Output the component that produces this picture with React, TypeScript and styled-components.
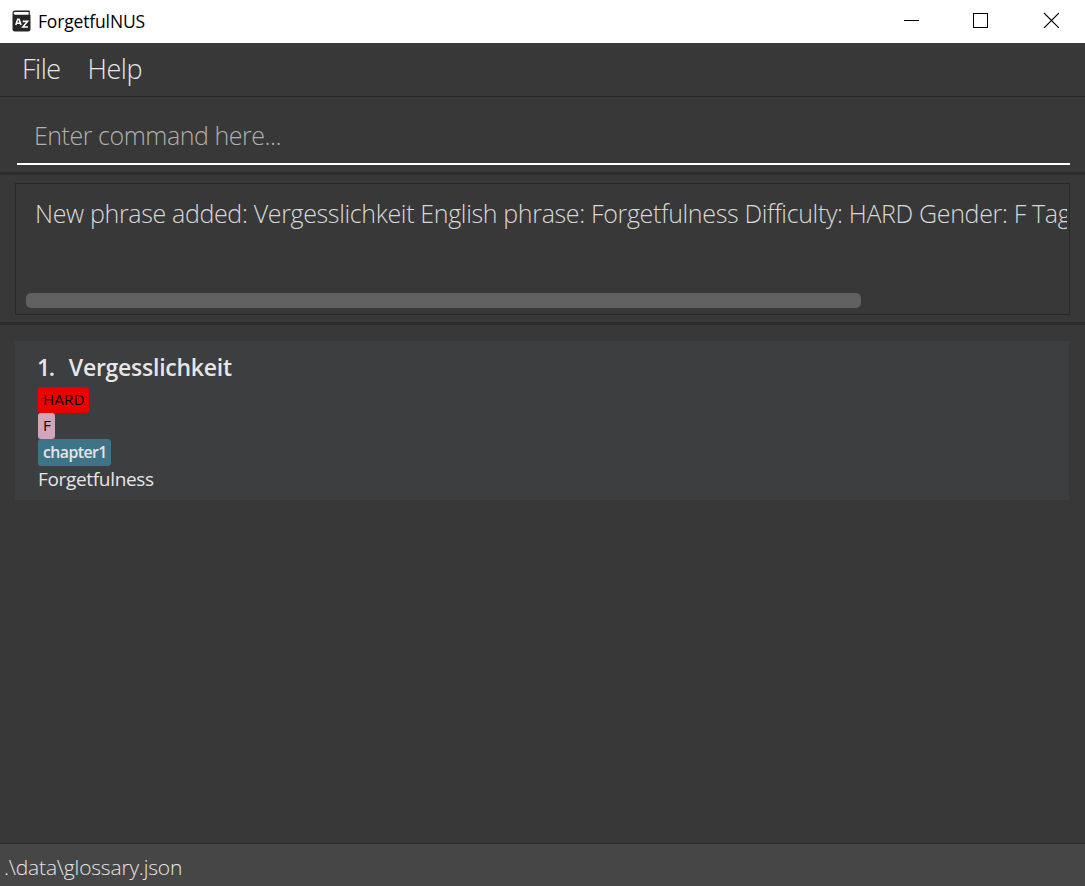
import React from "react";
import styled, { createGlobalStyle } from "styled-components";

const GlobalStyle = createGlobalStyle`
  * { box-sizing: border-box; }
  html, body { margin: 0; padding: 0; background: #383838; }
  body { font-family: "Open Sans", "Noto Sans", sans-serif; overflow: hidden; }
`;

const Window = styled.div`
  width: 1085px;
  height: 886px;
  display: flex;
  flex-direction: column;
  background: #383838;
  overflow: hidden;
`;

const TitleBar = styled.header`
  height: 43px;
  flex: none;
  display: flex;
  align-items: center;
  background: #ffffff;
  padding: 0 26px 2px 11px;
`;

const Label = styled.span<{ $size: number; $weight?: number; $spacing?: number; $color?: string }>`
  font-size: ${(p) => p.$size}px;
  font-weight: ${(p) => p.$weight ?? 400};
  letter-spacing: ${(p) => p.$spacing ?? 0}px;
  color: ${(p) => p.$color ?? "#e6e6e6"};
  white-space: pre;
`;

const AppTitle = styled.div`
  display: flex;
  flex: 1;
  align-items: center;
  gap: 7px;
  line-height: 24px;
`;

const WindowControls = styled.div`
  display: flex;
  gap: 54px;
  padding-bottom: 2px;
  svg { display: block; }
`;

const MenuBar = styled.nav`
  height: 54px;
  flex: none;
  display: flex;
  gap: 27px;
  padding: 7px 22px 0;
  line-height: 38px;
  border-bottom: 1px solid #292929;
`;

const CommandPane = styled.section`
  height: 78px;
  flex: none;
  padding: 18px 15px 0 17px;
  border-bottom: 3px solid #2c2c2c;
`;

const CommandField = styled.div`
  height: 50px;
  padding: 2px 17px 0;
  line-height: 36px;
  border-bottom: 2px solid #ffffff;
`;

const ResultPane = styled.section`
  height: 150px;
  flex: none;
  padding: 8px 15px 0;
  border-bottom: 3px solid #2c2c2c;
`;

const ResultBox = styled.div`
  height: 132px;
  border: 1px solid #292929;
  padding: 11px 2px 6px 10px;
  display: flex;
  flex-direction: column;
  justify-content: space-between;
`;

const ResultText = styled.div`
  padding-left: 9px;
  line-height: 36px;
  overflow: hidden;
  display: flex;
`;

const ScrollThumb = styled.div`
  width: 835px;
  height: 15px;
  border-radius: 5px;
  background: #606060;
`;

const PhraseList = styled.main`
  flex: 1;
  padding: 16px 16px 0 15px;
`;

const PhraseCard = styled.article`
  height: 159px;
  padding: 11px 23px;
  background: #3c3e3f;
  display: flex;
  flex-direction: column;
  align-items: flex-start;
`;

const PhraseTitle = styled.div`
  height: 35px;
  flex: none;
  line-height: 30px;
  margin-left: -1px;
  display: flex;
  gap: 15px;
`;

const Tag = styled.div<{ $bg: string; $width: number; $height?: number }>`
  width: ${(p) => p.$width}px;
  height: ${(p) => p.$height ?? 26}px;
  flex: none;
  line-height: ${(p) => p.$height ?? 25}px;
  padding-left: 5px;
  border-radius: 3px;
  background: ${(p) => p.$bg};
  display: flex;
`;

const Meaning = styled.div`
  line-height: 26px;
  display: flex;
`;

const StatusBar = styled.footer`
  height: 43px;
  flex: none;
  padding: 5px 4px 0;
  line-height: 36px;
  display: flex;
  background: #464646;
  border-top: 1px solid #2b2b2b;
`;

const BookIcon = () => (
  <svg width="20" height="22" viewBox="0 0 20 22">
    <path d="M4 0.5H18.8V4.8H19.5V19Q19.5 21.5 17 21.5H4Q1.5 21.5 1.5 19V3.5Q1.5 .5 4 .5Z" fill="#262626" />
    <path d="M4 2H17.6V4.7H4Q2.8 4.7 2.8 3.3Q2.8 2 4 2Z" fill="#fff" />
    <path d="M4.8 15L6.7 9.2H8.1L10 15M5.5 13.2H9.3M11.7 11.4H16.6L11.9 17H17" fill="none" stroke="#fff" strokeWidth="1.6" />
  </svg>
);

const App: React.FC = () => (
  <>
    <GlobalStyle />
    <Window>
      <TitleBar>
        <AppTitle>
          <BookIcon />
          <Label $size={17.5} $spacing={-0.16} $color="#000">ForgetfulNUS</Label>
        </AppTitle>
        <WindowControls>
          <svg width="15" height="16" viewBox="0 0 15 16"><path d="M0 8.5H15" stroke="#000" /></svg>
          <svg width="15" height="16" viewBox="0 0 15 16"><rect x=".5" y="1.5" width="14" height="14" fill="none" stroke="#000" /></svg>
          <svg width="17" height="16" viewBox="0 0 17 16"><path d="M2 1L17 16M17 1L2 16" stroke="#000" strokeWidth="1.1" /></svg>
        </WindowControls>
      </TitleBar>
      <MenuBar>
        <Label $size={27} $weight={300} $spacing={-0.5}>File</Label>
        <Label $size={27} $weight={300} $spacing={-0.5}>Help</Label>
      </MenuBar>
      <CommandPane>
        <CommandField>
          <Label $size={25} $weight={300} $spacing={-0.47} $color="#b0b0b0">Enter command here...</Label>
        </CommandField>
      </CommandPane>
      <ResultPane>
        <ResultBox>
          <ResultText>
            <Label $size={25} $weight={300} $spacing={-0.345} $color="#d8d8d8">
              New phrase added: Vergesslichkeit English phrase: Forgetfulness Difficulty: HARD Gender: F Tags: [chapter1]
            </Label>
          </ResultText>
          <ScrollThumb />
        </ResultBox>
      </ResultPane>
      <PhraseList>
        <PhraseCard>
          <PhraseTitle>
            <Label $size={23} $weight={600} $spacing={-1.3}>1.</Label>
            <Label $size={23} $weight={600} $spacing={-0.25}>Vergesslichkeit</Label>
          </PhraseTitle>
          <Tag $bg="#ed0000" $width={51}><Label $size={15.3} $color="#000">HARD</Label></Tag>
          <Tag $bg="#d3a4bc" $width={17}><Label $size={15.3} $color="#000">F</Label></Tag>
          <Tag $bg="#3e7487" $width={73} $height={27}><Label $size={15.8} $weight={600} $spacing={-0.55}>chapter1</Label></Tag>
          <Meaning><Label $size={19} $spacing={-0.33}>Forgetfulness</Label></Meaning>
        </PhraseCard>
      </PhraseList>
      <StatusBar>
        <Label $size={21} $weight={300} $spacing={-0.18}>.\data\glossary.json</Label>
      </StatusBar>
    </Window>
  </>
);

export default App;
